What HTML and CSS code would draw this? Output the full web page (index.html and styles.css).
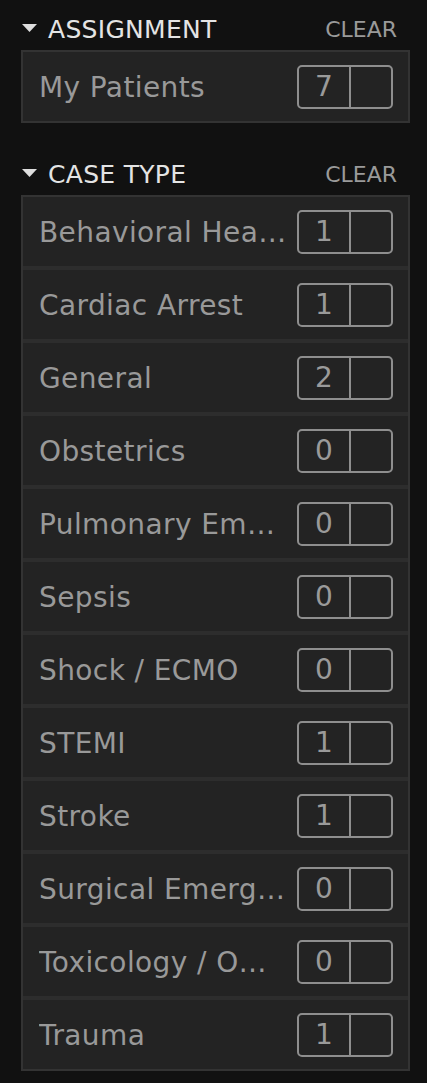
FILE: index.html
```html
<!DOCTYPE html>
<html>
<head>
<meta charset="utf-8">
<link rel="stylesheet" href="styles.css">
</head>
<body>
<div class="filters">
  <section class="group">
    <div class="group-head">
      <div class="group-title">
        <svg class="caret" width="15" height="8" viewBox="0 0 15 8"><polygon points="0,0 15,0 7.5,8" fill="#dedede"/></svg>
        <span>ASSIGNMENT</span>
      </div>
      <span class="clear">CLEAR</span>
    </div>
    <div class="panel">
      <div class="row"><span class="label">My Patients</span><span class="badge"><span class="count">7</span><span class="check"></span></span></div>
    </div>
  </section>

  <section class="group">
    <div class="group-head">
      <div class="group-title">
        <svg class="caret" width="15" height="8" viewBox="0 0 15 8"><polygon points="0,0 15,0 7.5,8" fill="#dedede"/></svg>
        <span>CASE TYPE</span>
      </div>
      <span class="clear">CLEAR</span>
    </div>
    <div class="panel">
      <div class="row"><span class="label">Behavioral Hea…</span><span class="badge"><span class="count">1</span><span class="check"></span></span></div>
      <div class="row"><span class="label">Cardiac Arrest</span><span class="badge"><span class="count">1</span><span class="check"></span></span></div>
      <div class="row"><span class="label">General</span><span class="badge"><span class="count">2</span><span class="check"></span></span></div>
      <div class="row"><span class="label">Obstetrics</span><span class="badge"><span class="count">0</span><span class="check"></span></span></div>
      <div class="row"><span class="label">Pulmonary Em…</span><span class="badge"><span class="count">0</span><span class="check"></span></span></div>
      <div class="row"><span class="label">Sepsis</span><span class="badge"><span class="count">0</span><span class="check"></span></span></div>
      <div class="row"><span class="label">Shock / ECMO</span><span class="badge"><span class="count">0</span><span class="check"></span></span></div>
      <div class="row"><span class="label">STEMI</span><span class="badge"><span class="count">1</span><span class="check"></span></span></div>
      <div class="row"><span class="label">Stroke</span><span class="badge"><span class="count">1</span><span class="check"></span></span></div>
      <div class="row"><span class="label">Surgical Emerg…</span><span class="badge"><span class="count">0</span><span class="check"></span></span></div>
      <div class="row"><span class="label">Toxicology / O…</span><span class="badge"><span class="count">0</span><span class="check"></span></span></div>
      <div class="row"><span class="label">Trauma</span><span class="badge"><span class="count">1</span><span class="check"></span></span></div>
    </div>
  </section>
</div>
</body>
</html>
```

FILE: styles.css
```css
html, body {
  margin: 0;
  padding: 0;
  background: #111111;
}

body {
  font-family: "DejaVu Sans", "Liberation Sans", sans-serif;
  height: 1083px;
  overflow: hidden;
}

.filters {
  padding: 8px 17px 0 21px;
}

.group + .group {
  margin-top: 30px;
}

.group-head {
  height: 42px;
  display: flex;
  align-items: center;
  justify-content: space-between;
}

.group-title {
  display: flex;
  align-items: center;
  gap: 11px;
  padding-left: 1px;
  color: #e4e4e4;
  font-size: 25px;
  letter-spacing: 0.3px;
}

.caret {
  display: block;
  margin-top: -2px;
}

.clear {
  color: #9a9a9a;
  font-size: 22px;
  padding-right: 13px;
}

.panel {
  border: 2px solid #333333;
  background: #232323;
}

.row {
  height: 69px;
  display: flex;
  align-items: center;
  justify-content: space-between;
  padding: 0 15px 0 16px;
  background: #232323;
}

.row + .row {
  border-top: 4px solid #2d2d2d;
}

.label {
  color: #999999;
  font-size: 28px;
  letter-spacing: 0.4px;
  padding-top: 2px;
  white-space: nowrap;
  overflow: hidden;
  text-overflow: ellipsis;
  min-width: 0;
}

.badge {
  flex: none;
  display: flex;
  width: 96px;
  height: 44px;
  box-sizing: border-box;
  border: 2px solid #8e8e8e;
  border-radius: 5px;
}

.count {
  width: 50px;
  border-right: 2px solid #8e8e8e;
  display: flex;
  align-items: center;
  justify-content: center;
  color: #9a9a9a;
  font-size: 28px;
}

.check {
  flex: 1;
}
```
